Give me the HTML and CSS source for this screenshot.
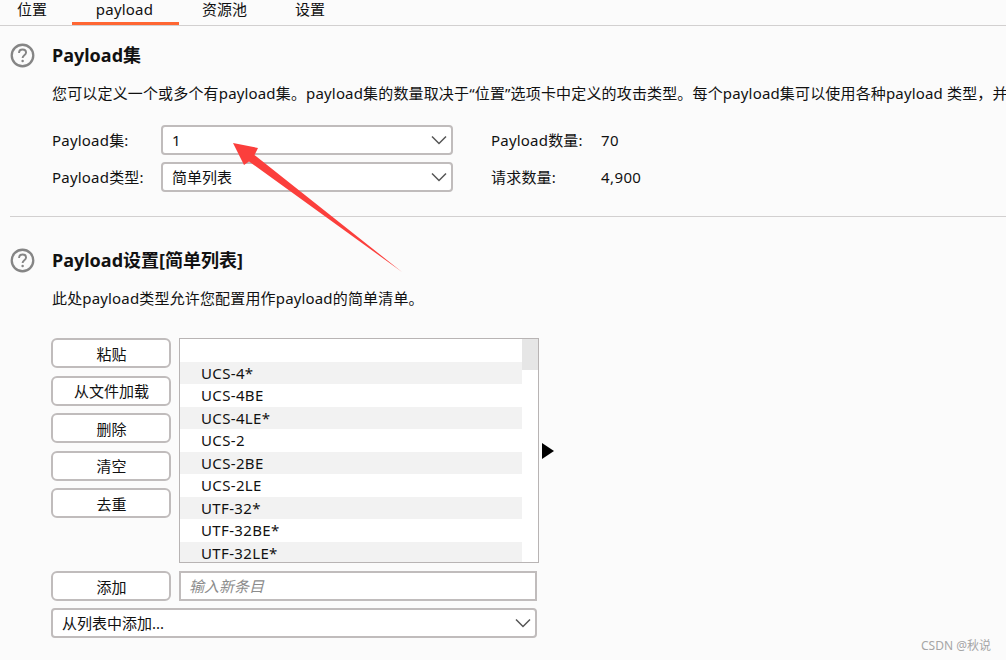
FILE: index.html
```html
<!DOCTYPE html>
<html lang="zh">
<head>
<meta charset="utf-8">
<title>Payload</title>
<link rel="stylesheet" href="styles.css">
</head>
<body>
<nav class="tabs">
  <div class="tab tab-first">位置</div>
  <div class="tab tab-active">payload</div>
  <div class="tab tab-pool">资源池</div>
  <div class="tab tab-last">设置</div>
</nav>
<main class="content">
  <section class="sets">
    <header class="head">
      <svg class="help" viewBox="0 0 26 26"><circle cx="13" cy="13" r="11.2" fill="none" stroke="#858585" stroke-width="2.4"/><path d="M9.4 10.4c0-2.2 1.6-3.6 3.7-3.600s3.600 1.300 3.600 3.200c0 2.700-3.600 2.800-3.600 5.600" fill="none" stroke="#858585" stroke-width="2"/><circle cx="13.100" cy="18.600" r="1.300" fill="#858585"/></svg>
      <h2 class="title">Payload集</h2>
    </header>
    <p class="desc">您可以定义一个或多个有payload集。payload集的数量取决于“位置”选项卡中定义的攻击类型。每个payload集可以使用各种payload 类型，并且每种payload类型都可以用不同的方式进行定制。</p>
    <div class="form-row">
      <span class="label">Payload集:</span>
      <div class="select select-short"><span>1</span><svg class="chev" viewBox="0 0 16 10"><path d="M1 1.500l7 7 7-7" fill="none" stroke="#555" stroke-width="1.500"/></svg></div>
      <span class="stat-label">Payload数量:</span><span class="stat-value">70</span>
    </div>
    <div class="form-row form-row-2">
      <span class="label">Payload类型:</span>
      <div class="select select-short"><span>简单列表</span><svg class="chev" viewBox="0 0 16 10"><path d="M1 1.500l7 7 7-7" fill="none" stroke="#555" stroke-width="1.500"/></svg></div>
      <span class="stat-label">请求数量:</span><span class="stat-value">4,900</span>
    </div>
  </section>
  <hr class="rule">
  <section class="settings">
    <header class="head">
      <svg class="help" viewBox="0 0 26 26"><circle cx="13" cy="13" r="11.2" fill="none" stroke="#858585" stroke-width="2.4"/><path d="M9.4 10.4c0-2.2 1.6-3.6 3.7-3.600s3.600 1.300 3.600 3.200c0 2.700-3.600 2.800-3.600 5.600" fill="none" stroke="#858585" stroke-width="2"/><circle cx="13.100" cy="18.600" r="1.300" fill="#858585"/></svg>
      <h2 class="title">Payload设置[简单列表]</h2>
    </header>
    <p class="desc">此处payload类型允许您配置用作payload的简单清单。</p>
    <div class="editor">
      <div class="buttons">
        <button class="btn">粘贴</button>
        <button class="btn">从文件加载</button>
        <button class="btn">删除</button>
        <button class="btn">清空</button>
        <button class="btn">去重</button>
      </div>
      <div class="listbox">
        <ul class="list">
          <li class="item"></li>
          <li class="item">UCS-4*</li>
          <li class="item">UCS-4BE</li>
          <li class="item">UCS-4LE*</li>
          <li class="item">UCS-2</li>
          <li class="item">UCS-2BE</li>
          <li class="item">UCS-2LE</li>
          <li class="item">UTF-32*</li>
          <li class="item">UTF-32BE*</li>
          <li class="item">UTF-32LE*</li>
        </ul>
        <div class="scrollbar"><div class="thumb"></div></div>
      </div>
      <div class="expand"></div>
    </div>
    <div class="add-row">
      <button class="btn">添加</button>
      <div class="input">输入新条目</div>
    </div>
    <div class="select select-wide"><span>从列表中添加...</span><svg class="chev" viewBox="0 0 16 10"><path d="M1 1.500l7 7 7-7" fill="none" stroke="#555" stroke-width="1.500"/></svg></div>
  </section>
</main>
<svg class="arrow" viewBox="0 0 1006 660"><polygon points="233,143 258,148 254.500,155 402,272 249,161.500 244,165" fill="#fb3f3c"/></svg>
<div class="watermark">CSDN @秋说</div>
</body>
</html>
```
FILE: styles.css
```css
* { box-sizing: border-box; }
html, body { margin: 0; height: 660px; overflow: hidden; }
body {
  position: relative;
  background: #fbfbfb;
  color: #111;
  font-family: "Noto Sans", "Noto Sans CJK SC", sans-serif;
  font-size: 15px;
  line-height: 22px;
}
.tabs {
  display: flex;
  height: 26px;
  border-bottom: 1px solid #d2d0d0;
}
.tab { height: 25px; line-height: 19px; text-align: center; }
.tab-first { margin-left: 17px; width: 30px; }
.tab-active {
  margin-left: 25px;
  width: 107px;
  border-bottom: 3px solid #ff6633;
  letter-spacing: 0.2px;
  padding-right: 2px;
}
.tab-pool { margin-left: 23px; width: 45px; }
.tab-last { margin-left: 48px; width: 30px; }
.content { display: block; }
.sets { height: 190px; padding-top: 15px; }
.head { display: flex; align-items: center; height: 28px; }
.help { width: 25px; height: 25px; margin-left: 10px; flex: none; }
.title {
  margin: 0 0 0 17px;
  font-size: 18px;
  font-weight: 700;
  line-height: 28px;
  color: #111;
}
.desc {
  margin: 13px 0 0 52px;
  height: 22px;
  white-space: nowrap;
  overflow: hidden;
  letter-spacing: 0.16px;
}
.form-row { display: flex; align-items: center; height: 30px; margin-top: 21px; }
.form-row-2 { margin-top: 7px; }
.label { width: 109px; margin-left: 52px; flex: none; letter-spacing: 0.2px; }
.select {
  display: flex;
  align-items: center;
  justify-content: space-between;
  height: 30px;
  padding: 0 4px 0 9px;
  background: #fff;
  border: 2px solid #c0bcbc;
  border-radius: 4px;
}
.select-short { width: 292px; flex: none; }
.select-wide { width: 486px; margin: 7px 0 0 51px; }
.chev { width: 16px; height: 10px; flex: none; }
.stat-label { width: 110px; margin-left: 38px; flex: none; letter-spacing: 0.2px; }
.stat-value { flex: none; letter-spacing: 0.4px; }
.rule {
  height: 1px;
  margin: 0 0 0 10px;
  border: 0;
  background: #d2d0d0;
}
.settings { padding-top: 29px; }
.settings .desc { margin-top: 13px; }
.editor { display: flex; margin: 29px 0 0 51px; }
.buttons {
  display: flex;
  flex-direction: column;
  gap: 7.500px;
  width: 120px;
  flex: none;
}
.btn {
  display: block;
  width: 120px;
  height: 30px;
  padding: 1px 0 0 1px;
  background: #fff;
  border: 2px solid #c0bcbc;
  border-radius: 6px;
  color: #111;
  font: inherit;
}
.listbox {
  display: flex;
  width: 360px;
  height: 225px;
  margin-left: 8px;
  background: #fff;
  border: 1px solid #b8b4b4;
  overflow: hidden;
  flex: none;
}
.list { flex: 1; margin: 0; padding: 0; list-style: none; }
.item { height: 22.500px; padding-left: 21px; line-height: 22.500px; letter-spacing: 0.35px; }
.item:nth-child(even) { background: #f2f2f2; }
.scrollbar { width: 16px; flex: none; }
.thumb { height: 31px; background: #e6e6e6; }
.expand {
  width: 0;
  height: 0;
  margin: 105px 0 0 3px;
  border-top: 8px solid transparent;
  border-bottom: 8px solid transparent;
  border-left: 12px solid #000;
}
.add-row { display: flex; gap: 8px; margin: 8px 0 0 51px; }
.input {
  width: 358px;
  height: 30px;
  padding-left: 8px;
  background: #fff;
  border: 2px solid #c0bcbc;
  color: #8c8c8c;
  font-style: italic;
  line-height: 26px;
}
.arrow { position: absolute; left: 0; top: 0; width: 1006px; height: 660px; pointer-events: none; }
.watermark {
  position: absolute;
  right: 15px;
  top: 637px;
  color: #a6a6a6;
  font-size: 12px;
  line-height: 18px;
}
```
